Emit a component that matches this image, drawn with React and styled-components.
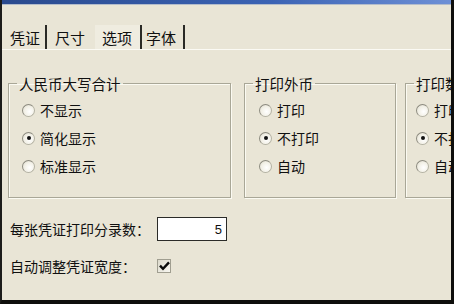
import React from "react";
import styled, { createGlobalStyle } from "styled-components";

const GlobalStyle = createGlobalStyle`
  html, body {
    margin: 0;
    padding: 0;
    background: #111;
    overflow: hidden;
  }
`;

const cjk = `"Noto Sans CJK SC", "Noto Sans", sans-serif`;

const Window = styled.div`
  width: 454px;
  height: 304px;
  box-sizing: border-box;
  background: #e9e5d6;
  border-left: 2px solid #1c1c1a;
  border-right: 3px solid #0e0e0c;
  border-bottom: 4px solid #0e0e0c;
  overflow: hidden;
  display: flex;
  flex-direction: column;
  font-family: ${cjk};
  font-size: 14px;
  color: #101010;
`;

const TitleEdge = styled.div`
  height: 4px;
  flex: none;
  background: linear-gradient(90deg, #2a4a8e 0%, #3b63b4 60%, #6e90d6 100%);
  border-bottom: 1px solid #b3bccb;
`;

const TabStrip = styled.div`
  display: flex;
  align-items: stretch;
  margin-top: 20px;
  height: 24px;
  border-bottom: 1px solid #fbfaf4;
  font-size: 15px;
`;

const Tab = styled.div`
  display: flex;
  align-items: center;
  padding: 0 ${(p) => p.$pr}px 0 ${(p) => p.$pl}px;
  border-right: 2px solid ${(p) => (p.$sep ? "#2a2a26" : "transparent")};
  background: ${(p) => (p.$active ? "#efece0" : "transparent")};
  line-height: 1;
`;

const Body = styled.div`
  padding: 25px 0 0 6px;
  display: flex;
  flex-direction: column;
`;

const GroupRow = styled.div`
  display: flex;
  align-items: flex-start;
`;

const Group = styled.fieldset`
  margin: 0 ${(p) => p.$mr}px 0 0;
  padding: 4px 8px 17px 8px;
  width: ${(p) => p.$w}px;
  flex: none;
  box-sizing: border-box;
  border: 1px solid #a9a797;
  box-shadow: inset 1px 1px 0 #fbfaf2, 1px 1px 0 #fbfaf2;
  display: flex;
  flex-direction: column;
`;

const Legend = styled.legend`
  padding: 0 2px;
  line-height: 17px;
  font-size: 14.5px;
  white-space: nowrap;
`;

const OptionRow = styled.div`
  height: 28px;
  display: flex;
  align-items: center;
  gap: 5px;
  padding-left: ${(p) => p.$indent}px;
  white-space: nowrap;
`;

const RadioDot = styled.span`
  width: 11px;
  height: 11px;
  flex: none;
  border-radius: 50%;
  border: 1px solid #b4b2a4;
  border-top-color: #8d8b80;
  border-left-color: #8d8b80;
  background: radial-gradient(circle at 60% 60%, #ffffff 0%, #f2f0e6 55%, #d6d3c4 100%);
  display: flex;
  align-items: center;
  justify-content: center;

  &::after {
    content: "";
    width: 4px;
    height: 4px;
    border-radius: 50%;
    background: #111;
    display: ${(p) => (p.$on ? "block" : "none")};
  }
`;

const FormGrid = styled.div`
  margin-top: 19px;
  display: grid;
  grid-template-columns: 147px auto;
  row-gap: 15px;
  align-items: center;
  padding-left: 2px;
`;

const Label = styled.span`
  white-space: nowrap;
`;

const NumberBox = styled.div`
  width: 70px;
  height: 24px;
  box-sizing: border-box;
  border: 1px solid #2b2b28;
  background: #ffffff;
  display: flex;
  align-items: center;
  justify-content: flex-end;
  padding-right: 4px;
  font-family: "Liberation Sans", Arial, sans-serif;
  font-size: 13px;
`;

const CheckBox = styled.span`
  width: 14px;
  height: 14px;
  box-sizing: border-box;
  border: 1px solid #a09e90;
  background: linear-gradient(135deg, #dcd9cb 0%, #f7f6f0 100%);
  display: flex;
  align-items: center;
  justify-content: center;
`;

const Radio = ({ on, children, indent = 5 }) => (
  <OptionRow $indent={indent}>
    <RadioDot $on={on} />
    <span>{children}</span>
  </OptionRow>
);

const tabs = [
  { label: "凭证", pl: 8, pr: 5, sep: true },
  { label: "尺寸", pl: 8, pr: 8, sep: false },
  { label: "选项", pl: 7, pr: 8, sep: true, active: true },
  { label: "字体", pl: 4, pr: 7, sep: true },
];

const App = () => (
  <>
    <GlobalStyle />
    <Window>
      <TitleEdge />
      <TabStrip>
        {tabs.map((t) => (
          <Tab key={t.label} $pl={t.pl} $pr={t.pr} $sep={t.sep} $active={t.active}>
            {t.label}
          </Tab>
        ))}
      </TabStrip>
      <Body>
        <GroupRow>
          <Group $w={223} $mr={13}>
            <Legend>人民币大写合计</Legend>
            <Radio>不显示</Radio>
            <Radio on>简化显示</Radio>
            <Radio>标准显示</Radio>
          </Group>
          <Group $w={152} $mr={9}>
            <Legend>打印外币</Legend>
            <Radio indent={6}>打印</Radio>
            <Radio indent={6} on>不打印</Radio>
            <Radio indent={6}>自动</Radio>
          </Group>
          <Group $w={150} $mr={0}>
            <Legend>打印数量</Legend>
            <Radio indent={2}>打印</Radio>
            <Radio indent={2} on>不打印</Radio>
            <Radio indent={2}>自动</Radio>
          </Group>
        </GroupRow>
        <FormGrid>
          <Label>每张凭证打印分录数：</Label>
          <NumberBox>5</NumberBox>
          <Label>自动调整凭证宽度：</Label>
          <CheckBox>
            <svg width="11" height="10" viewBox="0 0 11 10">
              <path d="M1 4.6 L4 7.8 L10 1.4" fill="none" stroke="#0a0a0a" strokeWidth="2.4" />
            </svg>
          </CheckBox>
        </FormGrid>
      </Body>
    </Window>
  </>
);

export default App;
